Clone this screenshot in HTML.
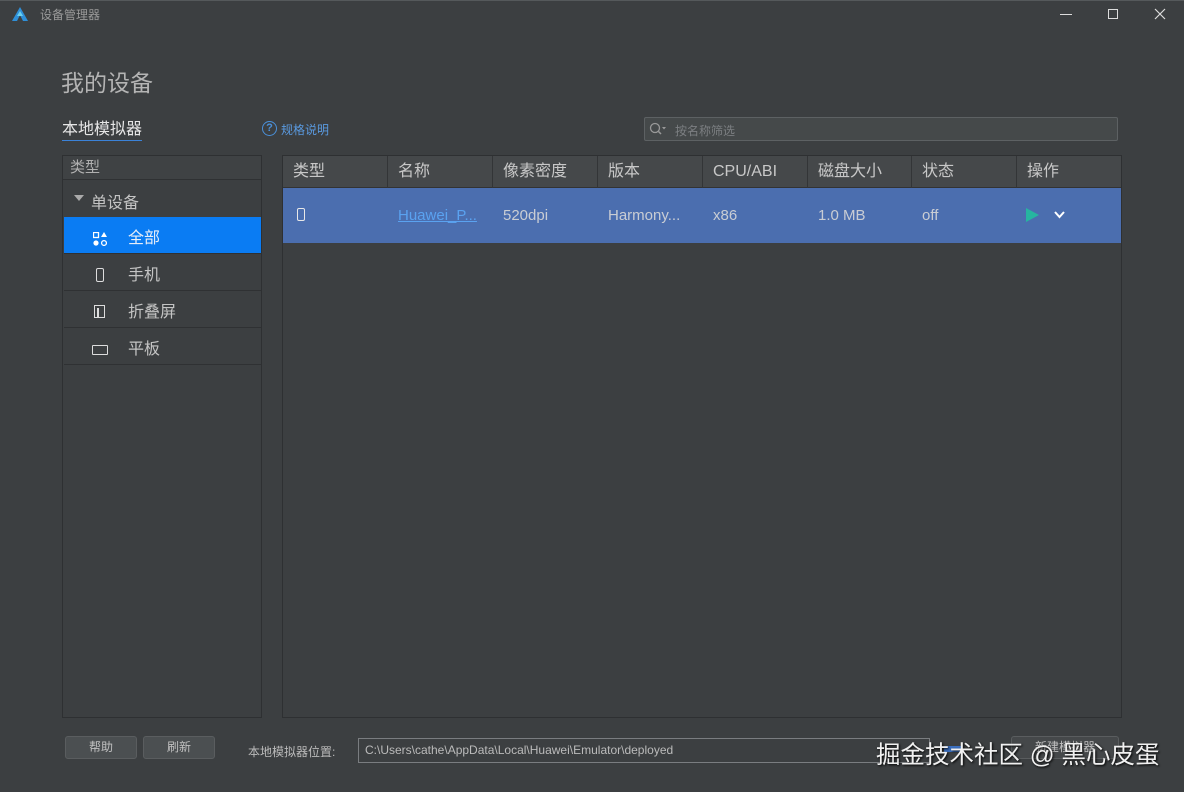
<!DOCTYPE html>
<html><head><meta charset="utf-8"><style>
*{margin:0;padding:0;box-sizing:border-box}
body{width:1184px;height:792px;background:#3c3f41;font-family:"Liberation Sans","Noto Sans CJK SC",sans-serif;color:#bbbbbb;position:relative;overflow:hidden}
.a{position:absolute}
.hd{background:#45484a}
.col{position:absolute;top:0;height:32px;line-height:32px;font-size:16px;color:#c8c8c8;padding-left:10px;border-right:1px solid #333537}
.cell{position:absolute;top:0;line-height:56px;font-size:15px;color:#c9cdd4;padding-left:10px}
.nav{position:absolute;left:1px;width:197px;height:37px;border-bottom:1px solid #2f3133;font-size:16px;line-height:43px;padding-left:64px;color:#c4c4c4}
.btn{position:absolute;height:23px;border:1px solid #5a5d5f;border-radius:3px;background:#4b4f51;color:#c0c0c0;font-size:12px;text-align:center;line-height:21px}
</style></head><body>
<div class="a" style="left:0;top:0;width:1184px;height:1px;background:#55595b"></div>
<svg class="a" style="left:12px;top:7px" width="16" height="14" viewBox="0 0 16 14"><path d="M8 0L16 14H11L8 8 5 14H0Z" fill="#2f8fd8"/><path d="M8 4L5 9H11Z" fill="#6ad0f0"/></svg>
<div class="a" style="left:40px;top:6px;font-size:12px;color:#9a9a9a">设备管理器</div>
<div class="a" style="left:1060px;top:14px;width:12px;height:1px;background:#ddd"></div>
<div class="a" style="left:1108px;top:9px;width:10px;height:10px;border:1px solid #ddd"></div>
<svg class="a" style="left:1154px;top:8px" width="12" height="12"><path d="M1 1L11 11M11 1L1 11" stroke="#ddd" stroke-width="1.2"/></svg>

<div class="a" style="left:61px;top:64px;font-size:23px;color:#b4b4b4">我的设备</div>
<div class="a" style="left:62px;top:120px;font-size:16px;color:#e6e6e6;border-bottom:1px solid #3b82d8;line-height:20px">本地模拟器</div>
<div class="a" style="left:262px;top:121px;width:15px;height:15px;border:1.5px solid #4a90d9;border-radius:50%;font-size:11px;line-height:12px;text-align:center;color:#4a90d9;font-weight:bold">?</div>
<div class="a" style="left:281px;top:121px;font-size:12px;color:#5a9ae0">规格说明</div>
<div class="a" style="left:644px;top:117px;width:474px;height:24px;border:1px solid #5d6163;border-radius:2px;background:#45494a"></div>
<svg class="a" style="left:649px;top:122px" width="18" height="14"><circle cx="6" cy="6" r="4.5" fill="none" stroke="#999" stroke-width="1.3"/><path d="M9.5 9.5L12 12" stroke="#999" stroke-width="1.5"/><path d="M13 5H17L15 7.5Z" fill="#999"/></svg>
<div class="a" style="left:675px;top:122px;font-size:12px;color:#7c7f82">按名称筛选</div>

<div class="a" style="left:62px;top:155px;width:200px;height:563px;border:1px solid #2e3032;background:#3c3f41">
 <div class="a" style="left:0;top:0;width:198px;height:24px;border-bottom:1px solid #2f3133;background:#3f4244;font-size:15px;padding-left:7px;line-height:24px;color:#b0b0b0">类型</div>
 <svg class="a" style="left:11px;top:39px" width="10" height="7"><path d="M0 0H10L5 6Z" fill="#aaa"/></svg>
 <div class="a" style="left:28px;top:33px;font-size:16px;color:#c4c4c4">单设备</div>
 <div class="nav" style="top:61px;background:#0a7cf3;color:#e8eef8;border-bottom:1px solid #2f3133">全部</div>
 <svg class="a" style="left:30px;top:76px" width="14" height="14"><rect x="0.5" y="0.5" width="5" height="5" fill="none" stroke="#fff" stroke-width="1.3"/><path d="M11 0L14 5H8Z" fill="#fff"/><circle cx="3" cy="11" r="2.6" fill="#fff"/><circle cx="11" cy="11" r="2.4" fill="none" stroke="#fff" stroke-width="1.3"/></svg>
 <div class="nav" style="top:98px">手机</div>
 <div class="a" style="left:33px;top:112px;width:8px;height:14px;border:1.5px solid #ddd;border-radius:2px"></div>
 <div class="nav" style="top:135px">折叠屏</div>
 <div class="a" style="left:31px;top:149px;width:11px;height:13px;border:1.5px solid #ddd"></div><div class="a" style="left:34px;top:152px;width:2px;height:10px;background:#ddd"></div>
 <div class="nav" style="top:172px">平板</div>
 <div class="a" style="left:29px;top:189px;width:16px;height:10px;border:1.5px solid #ddd;border-radius:1px"></div>
</div>

<div class="a" style="left:282px;top:155px;width:840px;height:563px;border:1px solid #2e3032">
 <div class="a hd" style="left:0;top:0;width:838px;height:32px;border-bottom:1px solid #333">
  <div class="col" style="left:0;width:105px">类型</div>
  <div class="col" style="left:105px;width:105px">名称</div>
  <div class="col" style="left:210px;width:105px">像素密度</div>
  <div class="col" style="left:315px;width:105px">版本</div>
  <div class="col" style="left:420px;width:105px">CPU/ABI</div>
  <div class="col" style="left:525px;width:104px">磁盘大小</div>
  <div class="col" style="left:629px;width:105px">状态</div>
  <div class="col" style="left:734px;width:104px;border:none">操作</div>
 </div>
 <div class="a" style="left:0;top:32px;width:838px;height:55px;background:#4b6eaf">
  <div class="a" style="left:14px;top:20px;width:8px;height:13px;border:1.5px solid #e8e8e8;border-radius:2px"></div>
  <div class="cell" style="left:105px;color:#5aa2f0;text-decoration:underline">Huawei_P...</div>
  <div class="cell" style="left:210px">520dpi</div>
  <div class="cell" style="left:315px">Harmony...</div>
  <div class="cell" style="left:420px">x86</div>
  <div class="cell" style="left:525px">1.0 MB</div>
  <div class="cell" style="left:629px">off</div>
  <svg class="a" style="left:743px;top:20px" width="13" height="14"><path d="M0 0L13 7 0 14Z" fill="#26b5a0"/></svg>
  <svg class="a" style="left:771px;top:23px" width="11" height="8"><path d="M1 1L5.5 6 10 1" fill="none" stroke="#fff" stroke-width="2"/></svg>
 </div>
</div>

<div class="btn" style="left:65px;top:736px;width:72px">帮助</div>
<div class="btn" style="left:143px;top:736px;width:72px">刷新</div>
<div class="a" style="left:248px;top:743px;font-size:12px;color:#bbb">本地模拟器位置:</div>
<div class="a" style="left:358px;top:738px;width:572px;height:25px;border:1px solid #7a7d80;font-size:12px;line-height:23px;padding-left:6px;color:#bbb">C:\Users\cathe\AppData\Local\Huawei\Emulator\deployed</div>
<div class="a" style="left:944px;top:746px;width:18px;height:6px;background:#3a6fc0"></div>
<div class="btn" style="left:1011px;top:736px;width:108px;background:#45484a">新建模拟器</div>
<div class="a" style="left:876px;top:736px;font-size:24.5px;color:#f0f0f0;text-shadow:1px 1px 2px #000;white-space:nowrap">掘金技术社区 @ 黑心皮蛋</div>
</body></html>
